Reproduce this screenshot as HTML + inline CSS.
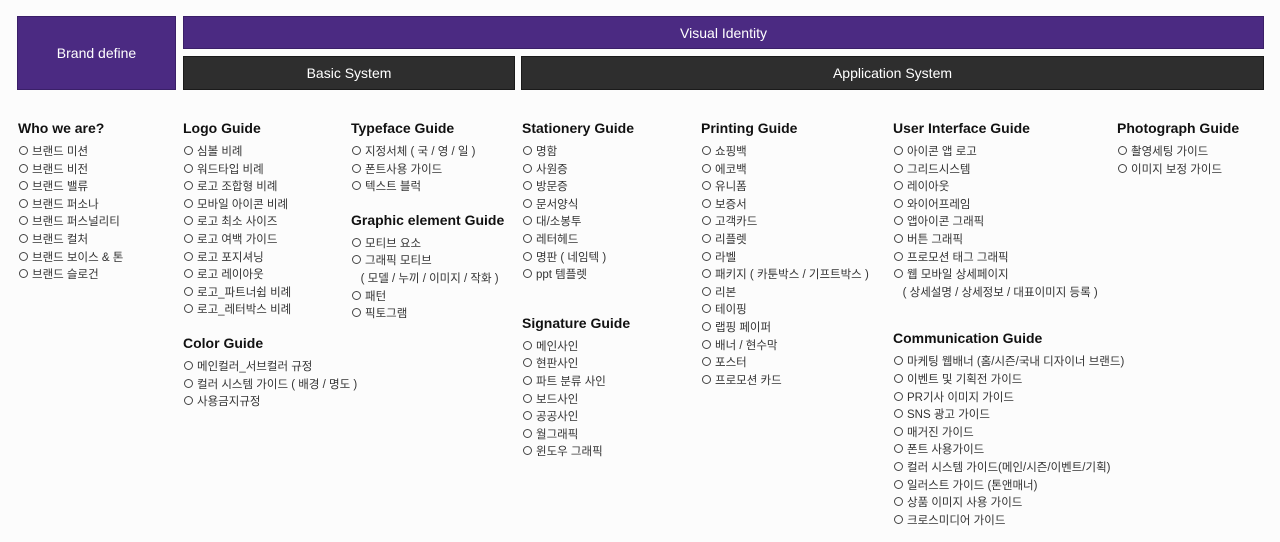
<!DOCTYPE html>
<html><head><meta charset="utf-8"><style>
body{margin:0;width:1280px;height:542px;background:#fcfcfc;position:relative;overflow:hidden;font-family:"Liberation Sans","Noto Sans CJK KR",sans-serif}
.b{position:absolute;color:#fff;font-size:14px;display:flex;align-items:center;justify-content:center;box-sizing:border-box}
.p{background:#4b2a82;border:1px solid #3a1f68}
.d{background:#2e2e2e;border:1px solid #1a1a1a}
.c{position:absolute;top:119px}
.c h3{margin:0 0 7px;font-size:14px;font-weight:bold;color:#111;height:18px;line-height:18px}
.c div{font-size:11.5px;color:#333;line-height:17.6px;white-space:nowrap}
.c div i{display:inline-block;width:7px;height:7px;border:1px solid #444;border-radius:50%;margin:0 4px 0 1px;vertical-align:0px}
.c h3.m{margin-top:14px}
</style></head><body>
<div class="b p" style="left:17px;top:16px;width:159px;height:74px">Brand define</div>
<div class="b p" style="left:183px;top:16px;width:1081px;height:33px">Visual Identity</div>
<div class="b d" style="left:183px;top:56px;width:332px;height:34px">Basic System</div>
<div class="b d" style="left:521px;top:56px;width:743px;height:34px">Application System</div>

<div class="c" style="left:18px"><h3>Who we are?</h3>
<div><i></i>브랜드 미션</div><div><i></i>브랜드 비전</div><div><i></i>브랜드 밸류</div><div><i></i>브랜드 퍼소나</div><div><i></i>브랜드 퍼스널리티</div><div><i></i>브랜드 컬처</div><div><i></i>브랜드 보이스 &amp; 톤</div><div><i></i>브랜드 슬로건</div></div>

<div class="c" style="left:183px"><h3>Logo Guide</h3>
<div><i></i>심볼 비례</div><div><i></i>워드타입 비례</div><div><i></i>로고 조합형 비례</div><div><i></i>모바일 아이콘 비례</div><div><i></i>로고 최소 사이즈</div><div><i></i>로고 여백 가이드</div><div><i></i>로고 포지셔닝</div><div><i></i>로고 레이아웃</div><div><i></i>로고_파트너쉽 비례</div><div><i></i>로고_레터박스 비례</div>
<h3 class="m" style="margin-top:14px">Color Guide</h3>
<div><i></i>메인컬러_서브컬러 규정</div><div><i></i>컬러 시스템 가이드 ( 배경 / 명도 )</div><div><i></i>사용금지규정</div></div>

<div class="c" style="left:351px"><h3>Typeface Guide</h3>
<div><i></i>지정서체 ( 국 / 영 / 일 )</div><div><i></i>폰트사용 가이드</div><div><i></i>텍스트 블럭</div>
<h3 class="m">Graphic element Guide</h3>
<div><i></i>모티브 요소</div><div><i></i>그래픽 모티브</div><div>&nbsp;&nbsp;&nbsp;( 모델 / 누끼 / 이미지 / 작화 )</div><div><i></i>패턴</div><div><i></i>픽토그램</div></div>

<div class="c" style="left:522px"><h3>Stationery Guide</h3>
<div><i></i>명함</div><div><i></i>사원증</div><div><i></i>방문증</div><div><i></i>문서양식</div><div><i></i>대/소봉투</div><div><i></i>레터헤드</div><div><i></i>명판 ( 네임텍 )</div><div><i></i>ppt 템플렛</div>
<h3 class="m" style="margin-top:29px">Signature Guide</h3>
<div><i></i>메인사인</div><div><i></i>현판사인</div><div><i></i>파트 분류 사인</div><div><i></i>보드사인</div><div><i></i>공공사인</div><div><i></i>월그래픽</div><div><i></i>윈도우 그래픽</div></div>

<div class="c" style="left:701px"><h3>Printing Guide</h3>
<div><i></i>쇼핑백</div><div><i></i>에코백</div><div><i></i>유니폼</div><div><i></i>보증서</div><div><i></i>고객카드</div><div><i></i>리플렛</div><div><i></i>라벨</div><div><i></i>패키지 ( 카툰박스 / 기프트박스 )</div><div><i></i>리본</div><div><i></i>테이핑</div><div><i></i>랩핑 페이퍼</div><div><i></i>배너 / 현수막</div><div><i></i>포스터</div><div><i></i>프로모션 카드</div></div>

<div class="c" style="left:893px"><h3>User Interface Guide</h3>
<div><i></i>아이콘 앱 로고</div><div><i></i>그리드시스템</div><div><i></i>레이아웃</div><div><i></i>와이어프레임</div><div><i></i>앱아이콘 그래픽</div><div><i></i>버튼 그래픽</div><div><i></i>프로모션 태그 그래픽</div><div><i></i>웹 모바일 상세페이지</div><div>&nbsp;&nbsp;&nbsp;( 상세설명 / 상세정보 / 대표이미지 등록 )</div>
<h3 class="m" style="margin-top:27px">Communication Guide</h3>
<div><i></i>마케팅 웹배너 (홈/시즌/국내 디자이너 브랜드)</div><div><i></i>이벤트 및 기획전 가이드</div><div><i></i>PR기사 이미지 가이드</div><div><i></i>SNS 광고 가이드</div><div><i></i>매거진 가이드</div><div><i></i>폰트 사용가이드</div><div><i></i>컬러 시스템 가이드(메인/시즌/이벤트/기획)</div><div><i></i>일러스트 가이드 (톤앤매너)</div><div><i></i>상품 이미지 사용 가이드</div><div><i></i>크로스미디어 가이드</div></div>

<div class="c" style="left:1117px"><h3>Photograph Guide</h3>
<div><i></i>촬영세팅 가이드</div><div><i></i>이미지 보정 가이드</div></div>
</body></html>
